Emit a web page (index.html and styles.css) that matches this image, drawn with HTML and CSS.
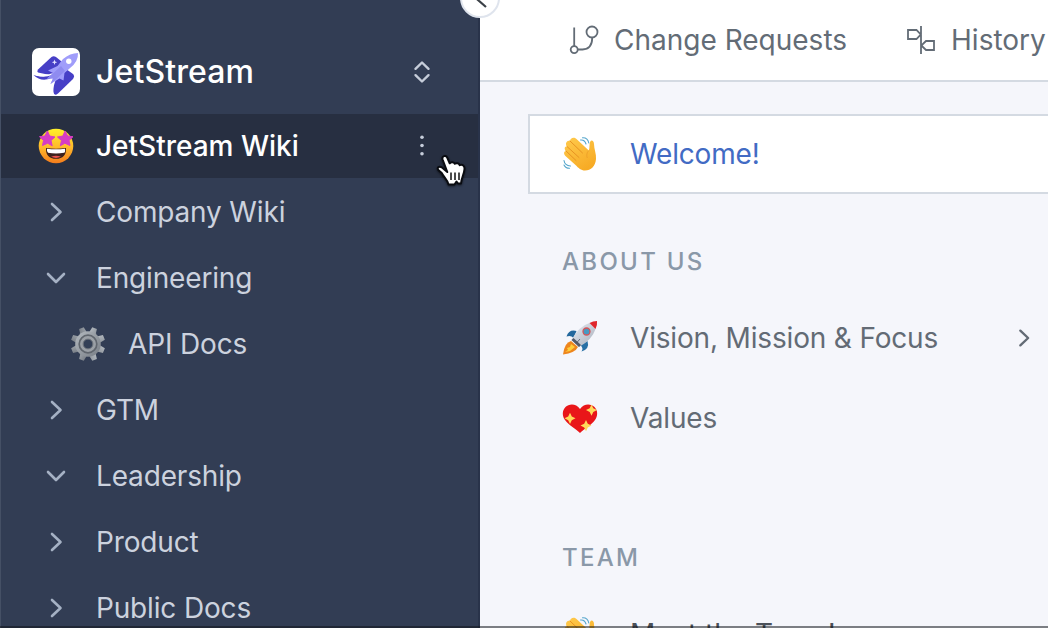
FILE: index.html
```html
<!DOCTYPE html>
<html lang="en">
<head>
<meta charset="utf-8">
<title>JetStream Wiki</title>
<link rel="stylesheet" href="styles.css">
</head>
<body>
<svg class="defs" width="0" height="0" aria-hidden="true">
  <defs>
    <linearGradient id="gold" x1="0" y1="0" x2="0" y2="1"><stop offset="0" stop-color="#fff02b"/><stop offset=".55" stop-color="#ffb82a"/><stop offset="1" stop-color="#f47c1c"/></linearGradient>
    <linearGradient id="steel" x1="0" y1="0" x2="1" y2="1"><stop offset="0" stop-color="#b4bac0"/><stop offset="1" stop-color="#777d85"/></linearGradient>
    <linearGradient id="hull" x1="0" y1="0" x2="1" y2="1"><stop offset="0" stop-color="#e9eef5"/><stop offset="1" stop-color="#a5adba"/></linearGradient>
    <linearGradient id="skin" x1="0" y1="0" x2=".6" y2="1"><stop offset="0" stop-color="#ffcb4d"/><stop offset="1" stop-color="#f7ab25"/></linearGradient>
    <symbol id="right" viewBox="0 0 24 24"><path d="M8 4l8.500 8L8 20" fill="none" stroke="currentColor" stroke-width="2.600" stroke-linecap="round" stroke-linejoin="round"/></symbol>
    <symbol id="down" viewBox="0 0 24 24"><path d="M4 8l8 8 8-8" fill="none" stroke="currentColor" stroke-width="2.600" stroke-linecap="round" stroke-linejoin="round"/></symbol>
    <symbol id="wave" viewBox="0 0 36 36">
      <path d="M4 15C1.500 12.500 3 10 5 10.500C2.600 7.500 5 3.800 8 5C8 2 12 .4 14.500 3L26.800 14.500C28 11.500 27 8 28.300 5.500C29.500 3.500 32 5 32 8C32 13 34.500 18 34 23C33.500 30 29 34.500 23 34.500C19 34.500 16.500 32 13.500 29L4 20.500C1 18 2 15 4 15Z" fill="url(#skin)"/>
      <path d="M4 15l10 9.500M5 10.500l12 11M8 5l12.500 12" stroke="#e89422" stroke-width="1" fill="none" stroke-linecap="round"/>
      <path d="M26.800 14.500c-2 2-2.600 5-1.500 7.500" stroke="#efa32a" stroke-width="1" fill="none"/>
      <path d="M18.500 4c2.500-.3 4.700 1.200 5.500 4M20.500 1.700c3.200-.2 5.700 2 6.300 5.300M2 24.500c.5 3.300 3.300 5.300 6.500 5.500M2 29c1 2.200 3 3.300 5.500 3.300" stroke="#55a6cc" stroke-width="1.100" fill="none" stroke-linecap="round"/>
    </symbol>
  </defs>
</svg>
<div class="app">
  <aside class="sidebar">
    <div class="space">
      <svg class="logo" viewBox="0 0 48 48">
        <path d="M19.500 9Q21.500 7.300 24 9L32 15.500L27 29L6 24.500Q4.500 23.500 6 21.500Z" fill="#473fc6"/>
        <path d="M34 21L41 26Q43 28 41 31L26 45.500Q22 48.500 21.500 44Q21 38 24.500 30Z" fill="#473fc6"/>
        <path d="M1.500 27Q10 30.500 20 25.500L21.500 29Q10 35.500 1.500 27Z" fill="#473fc6"/>
        <path d="M5.500 25Q13 28 21 25L20 27Q12 30 4 27.500Z" fill="#fff"/>
        <path d="M46 5Q46.500 14 37.500 20.500L32.500 25L31.500 32.500L27.500 30.500L18.500 36L21 30.500L15 30.500L21 25L16 22.500L25.500 18L31 11Q38 5 46 5Z" fill="#a09dfa"/>
        <path d="M29 18L33 23L25 30.500L18.500 36L21 30.500L15 30.500L21.500 25Z" fill="#8f8bf0"/>
        <circle cx="36.800" cy="13.300" r="2.700" fill="#fff"/>
        <path d="M22.500 11.500l.7 2 2 .7-2 .7-.7 2-.7-2-2-.7 2-.7z" fill="#e3e1ff"/>
      </svg>
      <span class="space-name">JetStream</span>
      <svg class="switch" viewBox="0 0 24 24"><path d="M5.500 8.800L12 2.500l6.500 6.300M5.500 15.200l6.500 6.300 6.500-6.300" fill="none" stroke="currentColor" stroke-width="2.400" stroke-linecap="round" stroke-linejoin="round"/></svg>
    </div>
    <nav class="tree">
      <div class="row active">
        <span class="slot"><svg class="emoji" viewBox="0 0 36 36">
          <circle cx="18" cy="18" r="17.300" fill="url(#gold)"/>
          <path id="star" d="M9.500 3L11.600 8L17 9L13 12.500L14.200 17.800L9.700 15.200L4.500 17.500L5.500 12.500L1.500 8.700L6.800 8Z" fill="#d63cc4" stroke="#d63cc4" stroke-width="1" stroke-linejoin="round"/>
          <use href="#star" transform="matrix(-1 0 0 1 36.500 0)"/>
          <path d="M8 20Q18 21.500 28 20Q28.500 30.800 18 30.800Q7.500 30.800 8 20Z" fill="#3d211d"/>
          <path d="M9 20.700Q18 22 27 20.700Q27.500 24.500 26 24.800Q18 26 10 24.800Q8.500 24 9 20.700Z" fill="#fff"/>
          <path d="M13 28.800Q18 26.500 23 28.800Q18 31 13 28.800Z" fill="#ec514d"/>
        </svg></span>
        <span class="label medium">JetStream Wiki</span>
        <svg class="more" viewBox="0 0 24 24"><g fill="currentColor"><circle cx="12" cy="3.200" r="1.800"/><circle cx="12" cy="11.500" r="1.800"/><circle cx="12" cy="19.800" r="1.800"/></g></svg>
      </div>
      <div class="row"><span class="slot"><svg class="chev"><use href="#right"/></svg></span><span class="label">Company Wiki</span></div>
      <div class="row"><span class="slot"><svg class="chev"><use href="#down"/></svg></span><span class="label">Engineering</span></div>
      <div class="row nested"><span class="slot"><svg class="emoji" viewBox="0 0 36 36">
        <g fill="url(#steel)"><path id="teeth" d="M14.500 7L15.500 .8h5L21.500 7v22L20.500 35.200h-5L14.500 29Z" transform="rotate(22.500 18 18)"/><use href="#teeth" transform="rotate(45 18 18)"/><use href="#teeth" transform="rotate(90 18 18)"/><use href="#teeth" transform="rotate(135 18 18)"/><circle cx="18" cy="18" r="12.800"/></g>
        <circle cx="18" cy="18" r="8.800" fill="#9ba0a6" stroke="#60666e" stroke-width="1.700"/>
        <circle cx="18" cy="18" r="4.900" fill="#344057" stroke="#70767e" stroke-width="1"/>
      </svg></span><span class="label">API Docs</span></div>
      <div class="row"><span class="slot"><svg class="chev"><use href="#right"/></svg></span><span class="label">GTM</span></div>
      <div class="row"><span class="slot"><svg class="chev"><use href="#down"/></svg></span><span class="label">Leadership</span></div>
      <div class="row"><span class="slot"><svg class="chev"><use href="#right"/></svg></span><span class="label">Product</span></div>
      <div class="row"><span class="slot"><svg class="chev"><use href="#right"/></svg></span><span class="label">Public Docs</span></div>
    </nav>
  </aside>
  <main class="main">
    <header class="topbar">
      <a class="action"><svg class="action-icon" viewBox="0 0 32 32"><g fill="none" stroke="currentColor" stroke-width="1.800"><path d="M6.200 3.500v18.800M10 25.500h4.500Q24.200 25 24.200 14"/><circle cx="6.200" cy="25.600" r="3.500"/><circle cx="24" cy="8" r="5.500"/></g></svg><span>Change Requests</span></a>
      <a class="action"><svg class="action-icon" viewBox="0 0 32 32"><g fill="none" stroke="currentColor" stroke-width="1.800"><path d="M16 2v28M3 6h8.500l4.200 4.500-4.200 4.500H3ZM29 17H21l-4.700 4.500L21 26h8Z"/></g></svg><span>History</span></a>
    </header>
    <div class="pages">
      <div class="page current"><svg class="emoji"><use href="#wave"/></svg><span class="title">Welcome!</span></div>
      <h2 class="heading">ABOUT US</h2>
      <div class="page"><svg class="emoji" viewBox="0 0 36 36">
        <path d="M14.500 11Q7 9 4.500 16.500Q9 15 11.500 18Z" fill="#23689d"/>
        <path d="M25.500 21Q28 29 19.500 31.500Q22 28 18 25Z" fill="#2870a5"/>
        <path d="M9 21Q2.500 22.500 1 34.500Q13 33 16 27Z" fill="#ee861d"/>
        <path d="M9 24L8 27L5 28L6 30L3 32L8 31L13 27Z" fill="#ffcf3b"/>
        <path d="M27.500 3Q17 6 9.500 20L17 27Q30 20 33.500 9Z" fill="url(#hull)"/>
        <path d="M27.500 3Q31 1 35 1Q35.500 5 33.500 9Z" fill="#df252b"/>
        <path d="M9.500 20L11.500 18L19 25L17 27Z" fill="#555c6a"/>
        <circle cx="24.500" cy="11.500" r="3.500" fill="#469ac3" stroke="#d65457" stroke-width="1.300"/>
        <path d="M18 19l-4 4.500" stroke="#4e5361" stroke-width=".8"/>
      </svg><span class="title">Vision, Mission &amp; Focus</span><svg class="open"><use href="#right"/></svg></div>
      <div class="page"><svg class="emoji" viewBox="0 0 36 36">
        <path d="M18 9C14 3 7 3.500 3.500 7C0 10.500 0 16 3 20C7 25.500 14 29 18 33C22 29 29 25.500 33 20C36 16 36 10.500 32.500 7C29 3.500 22 3 18 9Z" fill="#e91619"/>
        <g fill="#ffd95a"><path id="spark" d="M8 12.800L9.800 16.500L13.500 18.300L9.800 20.200L8 24L6.200 20.200L2.500 18.300L6.200 16.500Z"/><use href="#spark" x="21.500" y="-8.300"/><use href="#spark" x="16" y="7.300"/></g>
      </svg><span class="title">Values</span></div>
      <h2 class="heading team">TEAM</h2>
      <div class="page"><svg class="emoji"><use href="#wave"/></svg><span class="title dark">Meet the Team!</span></div>
    </div>
  </main>
  <div class="collapse"><svg viewBox="0 0 16 16"><path d="M11.500 1.500L4 8l8 7" fill="none" stroke="#3b4047" stroke-width="2.200"/></svg></div>
  <svg class="pointer" viewBox="0 0 36 36">
    <path d="M14.300 20L9.600 7.500C8.400 4 13 2.500 14.400 6L16.700 11.300C18 9.500 21 10 21.800 11.800C23.500 10.500 26.200 11.300 26.700 13.200C29.500 12 31.800 13.800 31.500 17C31.200 22 28.500 25.500 28 31.500L25 31.500L23.500 29.500L21.500 32.500H15.500C14.500 27.500 10.500 25 8.700 21L5.300 18C3.500 15.500 6.300 13.800 9 15.500Z" fill="#fff" stroke="#090b10" stroke-width="2" stroke-linejoin="round"/>
    <path d="M18 20.500v7.500M22 20.500v7.500M26 20.500v7.500" stroke="#111" stroke-width="1.500"/>
  </svg>
  <div class="bottom-edge"></div>
</div>
</body>
</html>
```

FILE: styles.css
```css
* { box-sizing: border-box; }
body { margin: 0; font-family: Inter, "Liberation Sans", sans-serif; }
.defs { position: absolute; }
.app { position: relative; display: flex; width: 1048px; height: 628px; overflow: hidden; }
.sidebar { flex: none; width: 480px; background: #323d54; border-left: 1px solid #455065; border-right: 2px solid #29334a; color: #ccd2de; }
.space { display: flex; align-items: center; height: 114px; padding: 30px 44px 0 31px; }
.logo { width: 48px; height: 48px; border-radius: 7px; background: #fff; margin-right: 16px; }
.space-name { flex: 1; font-size: 32px; line-height: 38px; padding-bottom: 1px; font-weight: 500; color: #fff; letter-spacing: .1px; }
.switch, .more { width: 24px; height: 24px; color: #c6cdda; }
.tree { display: flex; flex-direction: column; gap: 2px; }
.row { display: flex; flex: none; align-items: center; height: 64px; padding: 0 44px 0 31px; }
.nested { padding-left: 63px; }
.active { background: #272f41; color: #fff; }
.slot { display: flex; flex: none; justify-content: center; width: 48px; margin-right: 16px; }
.emoji { flex: none; width: 36px; height: 36px; }
.label { flex: 1; font-size: 28px; letter-spacing: -.16px; white-space: nowrap; }
.medium { font-weight: 500; letter-spacing: 0; }
.chev { width: 24px; height: 24px; color: #a5b1c4; }
.main { flex: 1; min-width: 0; background: #f5f6fb; }
.topbar { display: flex; gap: 58px; align-items: center; height: 82px; padding-left: 88px; background: #fff; border-bottom: 2px solid #d4dae2; color: #636c76; }
.action { display: flex; align-items: center; gap: 14px; font-size: 28px; white-space: nowrap; }
.action-icon { width: 32px; height: 32px; }
.pages { padding: 32px 0 0 48px; color: #636b75; }
.page { display: flex; align-items: center; height: 80px; padding-left: 34px; font-size: 28px; }
.title { margin-left: 32px; letter-spacing: -.17px; white-space: nowrap; }
.current { padding-left: 32px; background: #fff; border: 2px solid #d4dae2; border-right: 0; color: #426bc4; }
.heading { margin: 53px 0 22px; padding-left: 34px; font-size: 24px; line-height: 29px; font-weight: 500; letter-spacing: 2.300px; color: #8a98a8; }
.heading.team { margin-top: 85px; }
.dark { color: #4b5159; letter-spacing: 0; }
.open { width: 22px; height: 22px; margin: 0 13px 0 auto; }
.collapse { position: absolute; left: 460px; top: -22px; width: 40px; height: 40px; padding: 12px; border: 2px solid #dfe4ed; border-radius: 50%; background: #fff; }
.collapse svg { display: block; width: 16px; height: 16px; }
.pointer { position: absolute; left: 433px; top: 152px; width: 36px; height: 36px; overflow: visible; filter: drop-shadow(0 1px 1px #0008); }
.bottom-edge { position: absolute; left: 0; right: 0; bottom: 0; height: 2px; background: #11141a88; }
```
